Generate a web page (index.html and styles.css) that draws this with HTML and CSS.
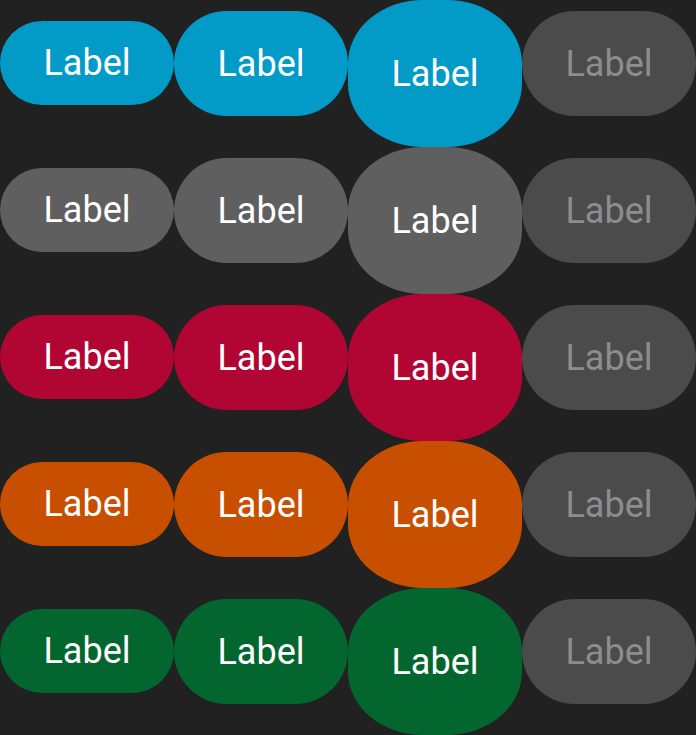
FILE: index.html
```html
<!DOCTYPE html>
<html lang="en">
<head>
<meta charset="utf-8">
<title>Buttons</title>
<link rel="stylesheet" href="styles.css">
</head>
<body>
<main class="grid">
  <div class="row blue">
    <button class="btn sm">Label</button>
    <button class="btn md">Label</button>
    <button class="btn lg">Label</button>
    <button class="btn md disabled">Label</button>
  </div>
  <div class="row gray">
    <button class="btn sm">Label</button>
    <button class="btn md">Label</button>
    <button class="btn lg">Label</button>
    <button class="btn md disabled">Label</button>
  </div>
  <div class="row red">
    <button class="btn sm">Label</button>
    <button class="btn md">Label</button>
    <button class="btn lg">Label</button>
    <button class="btn md disabled">Label</button>
  </div>
  <div class="row orange">
    <button class="btn sm">Label</button>
    <button class="btn md">Label</button>
    <button class="btn lg">Label</button>
    <button class="btn md disabled">Label</button>
  </div>
  <div class="row green">
    <button class="btn sm">Label</button>
    <button class="btn md">Label</button>
    <button class="btn lg">Label</button>
    <button class="btn md disabled">Label</button>
  </div>
</main>
</body>
</html>
```

FILE: styles.css
```css
html, body {
  margin: 0;
  padding: 0;
  background: #212121;
}

.grid {
  display: flex;
  flex-direction: column;
  width: 696px;
}

.row {
  display: grid;
  grid-template-columns: repeat(4, 174px);
  height: 147px;
  align-items: start;
}

.btn {
  display: flex;
  align-items: center;
  justify-content: center;
  width: 100%;
  border: none;
  margin: 0;
  padding: 0;
  font-family: Roboto, "Liberation Sans", sans-serif;
  font-size: 36px;
  font-weight: 400;
  line-height: normal;
  color: #ffffff;
  background: var(--tone);
}

.sm {
  height: 84px;
  margin-top: 21px;
  border-radius: 42px;
}

.md {
  height: 105px;
  margin-top: 11px;
  border-radius: 52.5px;
}

.lg {
  height: 147px;
  border-radius: 43%;
}

.blue { --tone: #029bc8; }
.gray { --tone: #5f5f5f; }
.red { --tone: #b10634; }
.orange { --tone: #c84f00; }
.green { --tone: #03662f; }

.btn.disabled {
  background: #4b4b4b;
  color: #8d8d8d;
}
```
